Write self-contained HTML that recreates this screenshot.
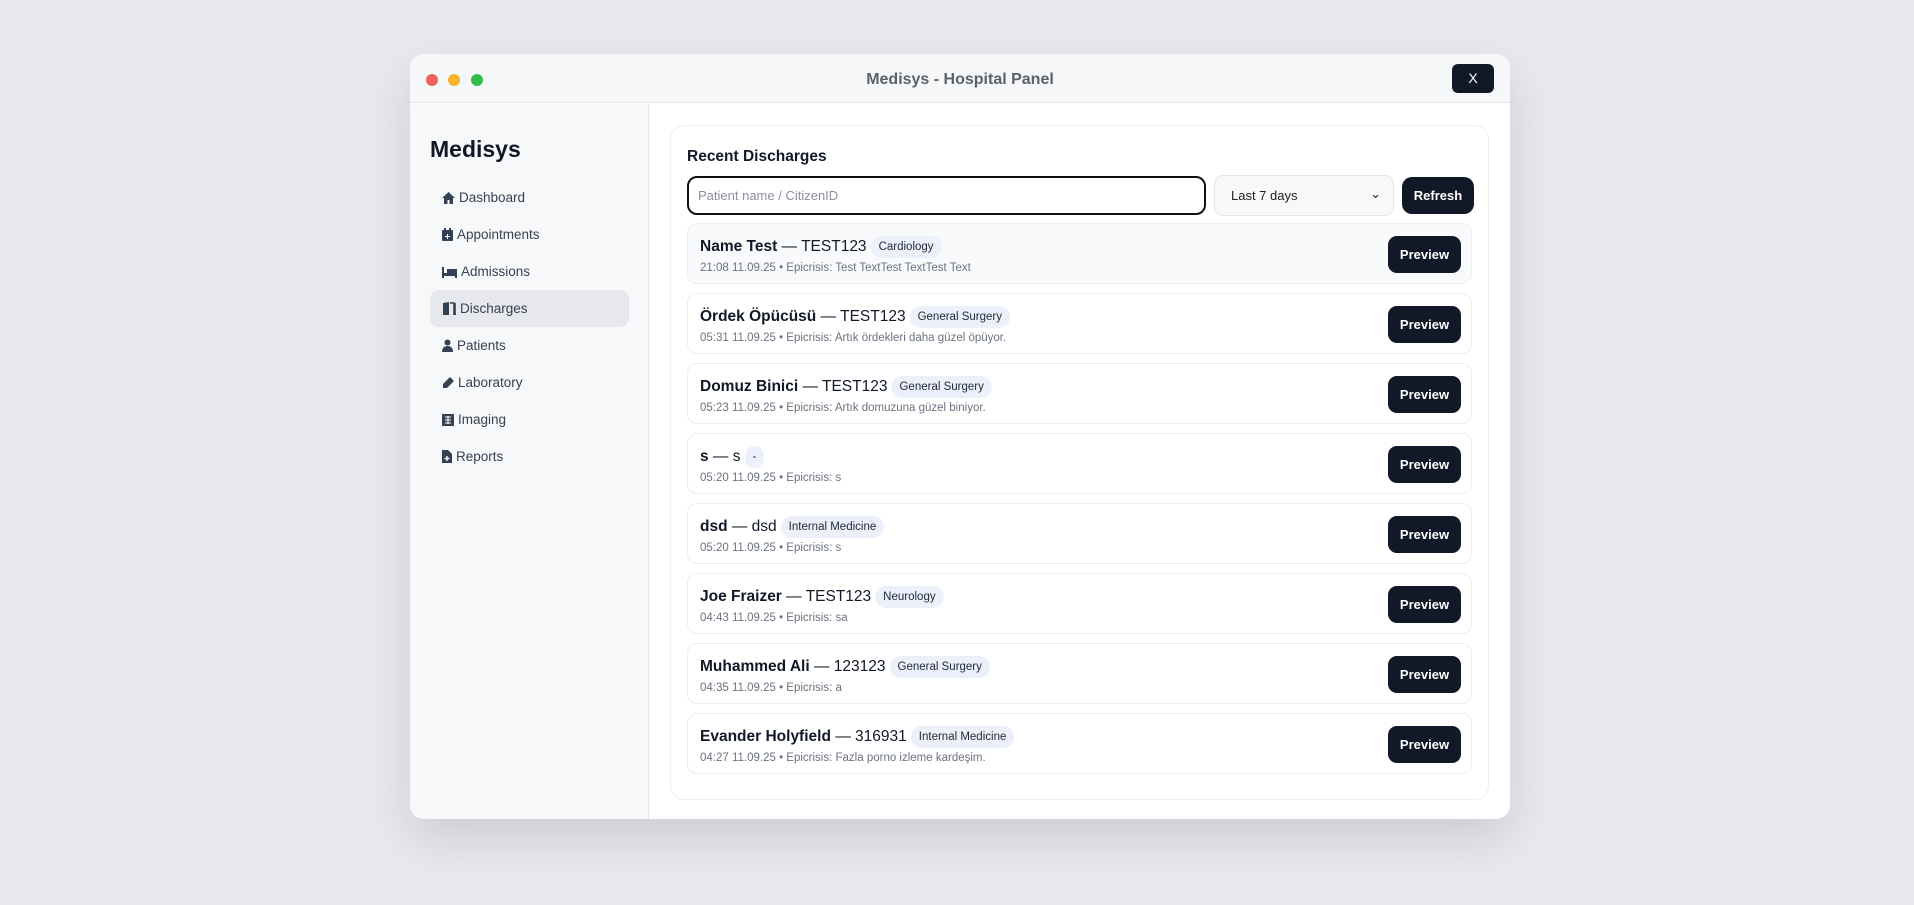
<!DOCTYPE html>
<html><head><meta charset="utf-8"><style>
*{box-sizing:border-box;margin:0;padding:0}
body{width:1914px;height:905px;background:#e7e9ee;font-family:"Liberation Sans",sans-serif;position:relative;overflow:hidden}
.win{position:absolute;left:410px;top:54px;width:1100px;height:765px;background:#fff;border-radius:14px;box-shadow:0 20px 50px rgba(0,0,0,.12);overflow:hidden}
.tb{height:49px;background:#f6f7f9;border-bottom:1px solid #e3e5e9;position:relative}
.dot{position:absolute;top:20px;width:12px;height:12px;border-radius:50%}
.title{position:absolute;left:0;right:0;top:17px;text-align:center;font-size:16px;color:#5b616b;font-weight:bold}
.x{position:absolute;left:1042px;top:10px;width:42px;height:29px;background:#111827;color:#fff;border-radius:6px;font-size:14px;text-align:center;line-height:29px}
.side{position:absolute;left:0;top:50px;width:239px;bottom:0;background:#f7f8fa;border-right:1px solid #e5e7eb}
.brand{position:absolute;left:20px;top:32px;font-size:23px;font-weight:bold;color:#111827}
.nav{position:absolute;left:20px;width:199px;height:37px;font-size:13.5px;color:#374151;line-height:37px;padding-left:12px}
.nav svg{vertical-align:-2px;margin-right:4px}
.act{background:#e6e8ee;border-radius:9px}
.card{position:absolute;left:260px;top:71px;width:819px;height:675px;border:1px solid #eceef2;border-radius:14px;background:#fff}
h2{position:absolute;left:16px;top:22px;font-size:15.5px;color:#111827}
.inp{position:absolute;left:16px;top:50px;width:519px;height:39px;border:2.5px solid #111;border-radius:10px;font-size:13px;color:#8a8f99;padding:10px 9px;}
.sel{position:absolute;left:543px;top:49px;width:180px;height:41px;border:1px solid #e2e5ea;border-radius:9px;background:#f7f8fa;font-size:13px;color:#222;padding:12px 16px}
.ref{position:absolute;left:731px;top:51px;width:72px;height:37px;background:#111827;color:#fff;border-radius:10px;font-size:13px;font-weight:bold;text-align:center;line-height:37px}
.row{position:absolute;left:16px;width:785px;height:61px;border:1px solid #eceef2;border-radius:10px;background:#fff}
.row.f{background:#f9fafc}
.nm{position:absolute;left:12px;top:12px;font-size:15.5px;color:#111827;white-space:nowrap}
.nm b{font-weight:bold}
.bd{display:inline-block;background:#ebf0fb;border-radius:12px;font-size:11.5px;padding:5px 8px;margin-left:4px;vertical-align:1px;color:#1f2937}
.sub{position:absolute;left:12px;top:38px;font-size:11.5px;color:#6b7280;white-space:nowrap}
.pv{position:absolute;left:700px;top:12px;width:73px;height:37px;background:#111827;color:#fff;border-radius:9px;font-size:13px;font-weight:bold;text-align:center;line-height:37px}
</style></head><body>
<div class="win">
<div class="tb"><div class="dot" style="left:16px;background:#f2625a"></div><div class="dot" style="left:38px;background:#f6b528"></div><div class="dot" style="left:61px;background:#2fbe44"></div>
<div class="title">Medisys - Hospital Panel</div><div class="x">X</div></div>
<div class="side">
<div class="brand">Medisys</div>
<div class="nav" style="top:75px"><svg width="13" height="12" viewBox="0 0 13 12"><path d="M6.5 0L0 6h2v6h3.5V8h2v4H11V6h2z" fill="#334155"/></svg>Dashboard</div>
<div class="nav" style="top:112px"><svg width="11" height="13" viewBox="0 0 11 13"><rect x="0" y="2" width="11" height="11" rx="1" fill="#334155"/><rect x="2" y="0" width="2" height="3" fill="#334155"/><rect x="7" y="0" width="2" height="3" fill="#334155"/><path d="M5 6h1v2h2v1H6v2H5V9H3V8h2z" fill="#fff"/></svg>Appointments</div>
<div class="nav" style="top:149px"><svg width="15" height="11" viewBox="0 0 15 11"><rect x="0" y="0" width="2" height="11" fill="#334155"/><rect x="0" y="6" width="15" height="3" fill="#334155"/><rect x="5" y="2" width="10" height="5" fill="#334155"/><rect x="13" y="6" width="2" height="5" fill="#334155"/></svg>Admissions</div>
<div class="nav act" style="top:186px"><svg width="14" height="13" viewBox="0 0 14 13"><path d="M1 1l6-1v13H1z" fill="#334155"/><path d="M8 1h4v12h2v-1h-1V1" stroke="#334155" stroke-width="1.6" fill="none"/></svg>Discharges</div>
<div class="nav" style="top:223px"><svg width="11" height="13" viewBox="0 0 11 13"><circle cx="5.5" cy="3.5" r="3" fill="#334155"/><path d="M0 13c0-4 2-6 5.5-6S11 9 11 13z" fill="#334155"/></svg>Patients</div>
<div class="nav" style="top:260px"><svg width="12" height="12" viewBox="0 0 12 12"><path d="M8 0l4 4-7 7H1v-4z" fill="#334155"/></svg>Laboratory</div>
<div class="nav" style="top:297px"><svg width="12" height="12" viewBox="0 0 12 12"><rect width="12" height="12" fill="#334155"/><path d="M3 3h6M3 6h6M3 9h6M6 2v8" stroke="#fff" stroke-width="1"/></svg>Imaging</div>
<div class="nav" style="top:334px"><svg width="10" height="13" viewBox="0 0 10 13"><path d="M0 0h6l4 4v9H0z" fill="#334155"/><path d="M5 6v5M2.5 8.5h5" stroke="#fff" stroke-width="1.4"/></svg>Reports</div>
</div>
<div class="card">
<h2>Recent Discharges</h2>
<div class="inp">Patient name / CitizenID</div>
<div class="sel">Last 7 days<span style="position:absolute;right:12px;top:10px;font-size:13px">&#8964;</span></div>
<div class="ref">Refresh</div>
<div class="row f" style="top:97px"><div class="nm"><b>Name Test</b> — TEST123<span class="bd">Cardiology</span></div><div class="sub">21:08 11.09.25 • Epicrisis: Test TextTest TextTest Text</div><div class="pv">Preview</div></div>
<div class="row" style="top:167px"><div class="nm"><b>Ördek Öpücüsü</b> — TEST123<span class="bd">General Surgery</span></div><div class="sub">05:31 11.09.25 • Epicrisis: Artık ördekleri daha güzel öpüyor.</div><div class="pv">Preview</div></div>
<div class="row" style="top:237px"><div class="nm"><b>Domuz Binici</b> — TEST123<span class="bd">General Surgery</span></div><div class="sub">05:23 11.09.25 • Epicrisis: Artık domuzuna güzel biniyor.</div><div class="pv">Preview</div></div>
<div class="row" style="top:307px"><div class="nm"><b>s</b> — s<span class="bd">-</span></div><div class="sub">05:20 11.09.25 • Epicrisis: s</div><div class="pv">Preview</div></div>
<div class="row" style="top:377px"><div class="nm"><b>dsd</b> — dsd<span class="bd">Internal Medicine</span></div><div class="sub">05:20 11.09.25 • Epicrisis: s</div><div class="pv">Preview</div></div>
<div class="row" style="top:447px"><div class="nm"><b>Joe Fraizer</b> — TEST123<span class="bd">Neurology</span></div><div class="sub">04:43 11.09.25 • Epicrisis: sa</div><div class="pv">Preview</div></div>
<div class="row" style="top:517px"><div class="nm"><b>Muhammed Ali</b> — 123123<span class="bd">General Surgery</span></div><div class="sub">04:35 11.09.25 • Epicrisis: a</div><div class="pv">Preview</div></div>
<div class="row" style="top:587px"><div class="nm"><b>Evander Holyfield</b> — 316931<span class="bd">Internal Medicine</span></div><div class="sub">04:27 11.09.25 • Epicrisis: Fazla porno izleme kardeşim.</div><div class="pv">Preview</div></div>
</div>
</div>
</body></html>
